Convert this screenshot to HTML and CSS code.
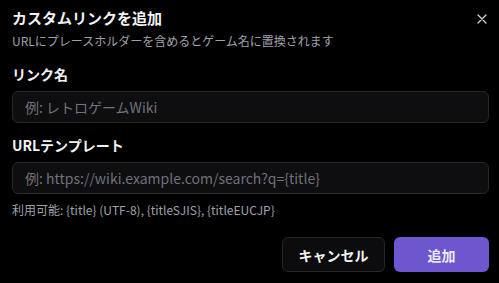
FILE: index.html
```html
<!DOCTYPE html>
<html lang="ja">
<head>
  <meta charset="UTF-8">
  <meta name="viewport" content="width=device-width, initial-scale=1.0">
  <title>カスタムリンクを追加</title>
  <link rel="stylesheet" href="styles.css">
</head>
<body>
<div class="dialog">
  <div class="dialog-header">
    <div>
      <h2 class="title">カスタムリンクを追加</h2>
      <p class="desc">URLにプレースホルダーを含めるとゲーム名に置換されます</p>
    </div>
    <button class="close" aria-label="閉じる">
      <svg width="10" height="10" viewBox="0 0 10 10"><path d="M1 1L9 9M9 1L1 9" stroke="currentColor" stroke-width="1.3" stroke-linecap="round"/></svg>
    </button>
  </div>

  <div class="field">
    <label for="link-name">リンク名</label>
    <input type="text" id="link-name" placeholder="例: レトロゲームWiki">
  </div>

  <div class="field">
    <label for="link-url">URLテンプレート</label>
    <input type="text" id="link-url" placeholder="例: https://wiki.example.com/search?q={title}">
    <p class="hint">利用可能: {title} (UTF-8), {titleSJIS}, {titleEUCJP}</p>
  </div>

  <div class="actions">
    <button class="btn btn-cancel">キャンセル</button>
    <button class="btn btn-add">追加</button>
  </div>
</div>
</body>
</html>
```

FILE: styles.css
```css
* {
  margin: 0;
  padding: 0;
  box-sizing: border-box;
}

html, body {
  background: #000;
  color: #f2f2f2;
  font-family: "Noto Sans CJK JP", "Noto Sans", sans-serif;
}

.dialog {
  width: 499px;
  height: 283px;
  padding: 7px 10px 0 12px;
}

.dialog-header {
  display: flex;
  justify-content: space-between;
  align-items: flex-start;
}

.title {
  font-size: 15px;
  font-weight: 700;
  line-height: 22px;
}

.desc {
  margin-top: 3px;
  font-size: 12px;
  line-height: 18px;
  color: #a1a1aa;
}

.close {
  margin-top: 7px;
  margin-right: 2px;
  background: none;
  border: none;
  color: #d4d4d8;
  cursor: pointer;
  display: flex;
}

.field {
  margin-top: 14px;
}

.field + .field {
  margin-top: 12px;
}

.field label {
  display: block;
  font-size: 14px;
  font-weight: 700;
  line-height: 20px;
}

.field input {
  display: block;
  width: 477px;
  height: 32px;
  margin-top: 7px;
  padding: 0 12px;
  background: #0e0e10;
  border: 1px solid #27272a;
  border-radius: 6px;
  color: #f2f2f2;
  font-family: inherit;
  font-size: 14px;
}

.field input::placeholder {
  color: #71717a;
}

.hint {
  margin-top: 8px;
  font-size: 12px;
  line-height: 16px;
  color: #a1a1aa;
}

.actions {
  display: flex;
  justify-content: flex-end;
  gap: 9px;
  margin-top: 19px;
}

.btn {
  height: 35px;
  border-radius: 6px;
  font-family: inherit;
  font-size: 14px;
  font-weight: 700;
  cursor: pointer;
}

.btn-cancel {
  width: 103px;
  background: #0c0c0e;
  border: 1px solid #27272a;
  color: #f2f2f2;
}

.btn-add {
  width: 95px;
  background: #6e56cf;
  border: none;
  color: #ece9fb;
}
```
